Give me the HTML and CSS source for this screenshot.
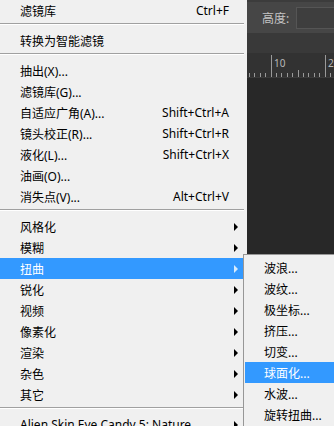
FILE: index.html
```html
<!DOCTYPE html>
<html lang="zh-CN">
<head>
    <meta charset="UTF-8">
    <title>滤镜菜单</title>
    <link rel="stylesheet" href="styles.css">
</head>
<body>
    <div class="screen">
        <div class="menu">
            <div class="item"><span>滤镜库</span><span class="key">Ctrl+F</span></div>
            <div class="sep"></div>
            <div class="item"><span>转换为智能滤镜</span></div>
            <div class="sep"></div>
            <div class="item"><span>抽出(X)...</span></div>
            <div class="item"><span>滤镜库(G)...</span></div>
            <div class="item"><span>自适应广角(A)...</span><span class="key">Shift+Ctrl+A</span></div>
            <div class="item"><span>镜头校正(R)...</span><span class="key">Shift+Ctrl+R</span></div>
            <div class="item"><span>液化(L)...</span><span class="key">Shift+Ctrl+X</span></div>
            <div class="item"><span>油画(O)...</span></div>
            <div class="item"><span>消失点(V)...</span><span class="key">Alt+Ctrl+V</span></div>
            <div class="sep"></div>
            <div class="item"><span>风格化</span><i class="arrow"></i></div>
            <div class="item"><span>模糊</span><i class="arrow"></i></div>
            <div class="item active"><span>扭曲</span><i class="arrow"></i></div>
            <div class="item"><span>锐化</span><i class="arrow"></i></div>
            <div class="item"><span>视频</span><i class="arrow"></i></div>
            <div class="item"><span>像素化</span><i class="arrow"></i></div>
            <div class="item"><span>渲染</span><i class="arrow"></i></div>
            <div class="item"><span>杂色</span><i class="arrow"></i></div>
            <div class="item"><span>其它</span><i class="arrow"></i></div>
            <div class="sep"></div>
            <div class="item"><span>Alien Skin Eye Candy 5: Nature</span><i class="arrow"></i></div>
        </div>

        <div class="workspace">
            <div class="options">
                <span class="label">高度:</span>
                <span class="field"></span>
            </div>
            <div class="band"></div>
            <svg class="ruler" width="87" height="24" viewBox="0 0 87 24">
                <rect x="0" y="0" width="87" height="24" fill="#323232"/>
                <g stroke="#9a9a9a" stroke-width="1">
                    <line x1="2.5" y1="20" x2="2.5" y2="24"/>
                    <line x1="7.5" y1="20" x2="7.5" y2="24"/>
                    <line x1="13.5" y1="20" x2="13.5" y2="24"/>
                    <line x1="18.5" y1="20" x2="18.5" y2="24"/>
                    <line x1="24.5" y1="2" x2="24.5" y2="24"/>
                    <line x1="29.5" y1="20" x2="29.5" y2="24"/>
                    <line x1="34.5" y1="20" x2="34.5" y2="24"/>
                    <line x1="40.5" y1="20" x2="40.5" y2="24"/>
                    <line x1="45.5" y1="20" x2="45.5" y2="24"/>
                    <line x1="51.5" y1="17" x2="51.5" y2="24"/>
                    <line x1="56.5" y1="20" x2="56.5" y2="24"/>
                    <line x1="61.5" y1="20" x2="61.5" y2="24"/>
                    <line x1="67.5" y1="20" x2="67.5" y2="24"/>
                    <line x1="72.5" y1="20" x2="72.5" y2="24"/>
                    <line x1="78.5" y1="2" x2="78.5" y2="24"/>
                    <line x1="83.5" y1="20" x2="83.5" y2="24"/>
                </g>
                <text x="27" y="14" fill="#b8b8b8" font-family="Noto Sans, sans-serif" font-size="10">10</text>
                <text x="81" y="14" fill="#b8b8b8" font-family="Noto Sans, sans-serif" font-size="10">20</text>
            </svg>
            <div class="canvas"></div>
        </div>

        <div class="submenu">
            <div class="item"><span>波浪...</span></div>
            <div class="item"><span>波纹...</span></div>
            <div class="item"><span>极坐标...</span></div>
            <div class="item"><span>挤压...</span></div>
            <div class="item"><span>切变...</span></div>
            <div class="item active"><span>球面化...</span></div>
            <div class="item"><span>水波...</span></div>
            <div class="item"><span>旋转扭曲...</span></div>
        </div>
    </div>
</body>
</html>
```

FILE: styles.css
```css
body {
    margin: 0;
    padding: 0;
    font-family: "Noto Sans", "Noto Sans CJK SC", sans-serif;
    font-size: 12px;
    color: #000;
    background-color: #282828;
}

.screen {
    position: relative;
    display: flex;
    width: 334px;
    height: 426px;
    overflow: hidden;
}

.menu {
    width: 247px;
    flex-shrink: 0;
    background-color: #f0f0f0;
}

.item {
    display: flex;
    align-items: center;
    height: 21px;
    padding: 0 9px 0 20px;
    white-space: nowrap;
}

.item .key {
    margin-left: auto;
    margin-right: 9px;
}

.item .arrow {
    margin-left: auto;
    width: 0;
    height: 0;
    border-left: 4px solid #000;
    border-top: 4px solid transparent;
    border-bottom: 4px solid transparent;
}

.item.active {
    background-color: #3399ff;
    color: #fff;
}

.item.active .arrow {
    border-left-color: #d6ebfd;
}

.sep {
    height: 1px;
    margin: 2px 3px 5px 0;
    background-color: #a0a0a0;
    border-bottom: 1px solid #fff;
}

.workspace {
    flex: 1;
    display: flex;
    flex-direction: column;
}

.options {
    display: flex;
    align-items: center;
    height: 33px;
    padding-left: 15px;
    background-color: #464646;
    border-top: 2px solid #3c3c3c;
    box-sizing: border-box;
}

.options .label {
    color: #c4c4c4;
    width: 34px;
}

.options .field {
    flex: 1;
    height: 20px;
    background-color: #3e3e3e;
    border: 1px solid #555;
    border-right: none;
}

.band {
    height: 20px;
    background-color: #393939;
}

.ruler {
    display: block;
}

.canvas {
    flex: 1;
    background-color: #282828;
    border-top: 1px solid #3a3a3a;
}

.submenu {
    position: absolute;
    left: 243px;
    top: 254px;
    width: 140px;
    padding: 2px 0 2px 1px;
    background-color: #f0f0f0;
    border: 1px solid #979797;
}

.submenu .item {
    padding-left: 19px;
}
```
